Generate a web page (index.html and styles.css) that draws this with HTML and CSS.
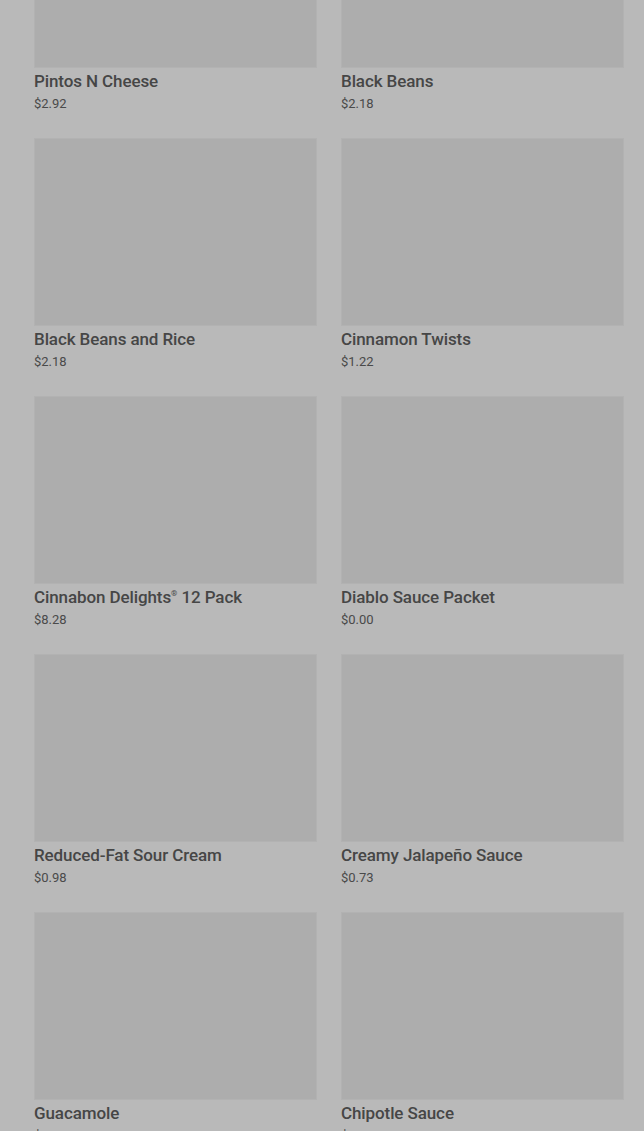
FILE: index.html
```html
<!DOCTYPE html>
<html lang="en">
<head>
  <meta charset="UTF-8">
  <meta name="viewport" content="width=device-width, initial-scale=1.0">
  <title>Sides</title>
  <link rel="stylesheet" href="styles.css">
</head>
<body>
  <div class="menu-grid">
    <div class="product">
      <div class="product-img"></div>
      <div class="product-name">Pintos N Cheese</div>
      <div class="product-price">$2.92</div>
    </div>
    <div class="product">
      <div class="product-img"></div>
      <div class="product-name">Black Beans</div>
      <div class="product-price">$2.18</div>
    </div>
    <div class="product">
      <div class="product-img"></div>
      <div class="product-name">Black Beans and Rice</div>
      <div class="product-price">$2.18</div>
    </div>
    <div class="product">
      <div class="product-img"></div>
      <div class="product-name">Cinnamon Twists</div>
      <div class="product-price">$1.22</div>
    </div>
    <div class="product">
      <div class="product-img"></div>
      <div class="product-name">Cinnabon Delights<sup>®</sup> 12 Pack</div>
      <div class="product-price">$8.28</div>
    </div>
    <div class="product">
      <div class="product-img"></div>
      <div class="product-name">Diablo Sauce Packet</div>
      <div class="product-price">$0.00</div>
    </div>
    <div class="product">
      <div class="product-img"></div>
      <div class="product-name">Reduced-Fat Sour Cream</div>
      <div class="product-price">$0.98</div>
    </div>
    <div class="product">
      <div class="product-img"></div>
      <div class="product-name">Creamy Jalapeño Sauce</div>
      <div class="product-price">$0.73</div>
    </div>
    <div class="product">
      <div class="product-img"></div>
      <div class="product-name">Guacamole</div>
      <div class="product-price">$1.49</div>
    </div>
    <div class="product">
      <div class="product-img"></div>
      <div class="product-name">Chipotle Sauce</div>
      <div class="product-price">$0.00</div>
    </div>
  </div>
</body>
</html>
```

FILE: styles.css
```css
body {
  margin: 0;
  background: #b9b9b9;
  font-family: Roboto, "Liberation Sans", sans-serif;
  color: #464646;
  overflow: hidden;
}
.menu-grid {
  display: grid;
  grid-template-columns: 283px 283px;
  column-gap: 24px;
  row-gap: 25px;
  margin-top: -120px;
  padding: 0 20px 0 34px;
}
.product-img {
  height: 188px;
  background: #adadad;
  box-sizing: border-box;
  border: 1px solid #b2b2b2;
}
.product-name {
  margin-top: 4px;
  font-size: 17px;
  line-height: 18px;
  font-weight: 500;
  letter-spacing: -0.1px;
}
.product-name sup {
  font-size: 8px;
  line-height: 0;
}
.product-price {
  margin-top: 5px;
  font-size: 13px;
  line-height: 18px;
  color: #4a4a4a;
}
```
